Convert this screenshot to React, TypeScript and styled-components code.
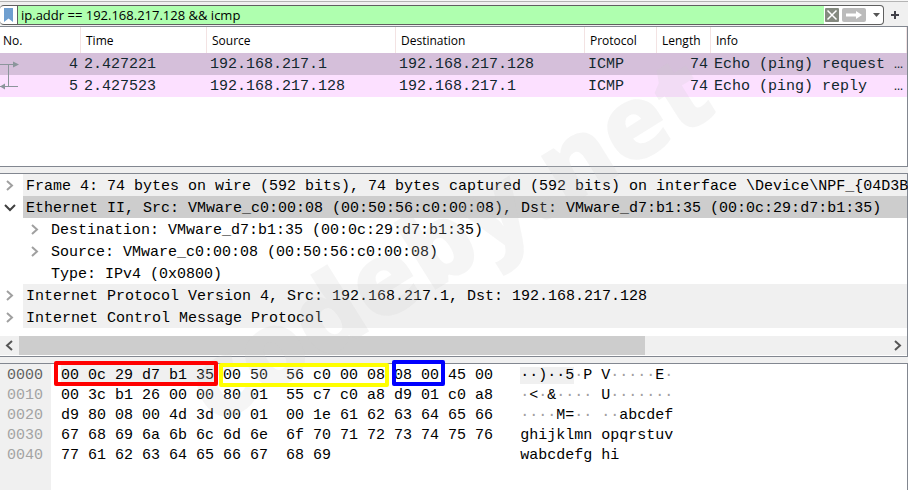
import React from "react";
import styled, { createGlobalStyle, css } from "styled-components";

const mono = '"Liberation Mono", "DejaVu Sans Mono", monospace';
const sans = '"Open Sans", "Noto Sans", sans-serif';
const line = "#828790";

const GlobalStyle = createGlobalStyle`
  *, *::before, *::after { box-sizing: border-box; }
  body { margin: 0; background: #f0f0f0; color: #000; }
  button { margin: 0; padding: 0; border: 0; background: none; }
  table { border-collapse: separate; border-spacing: 0; }
  svg { display: block; }
`;

const Window = styled.main`
  position: relative;
  display: flex;
  flex-direction: column;
  min-height: 100vh;
  overflow: hidden;
`;

const FilterBar = styled.form`
  display: flex;
  align-items: center;
  height: 26px;
  padding-top: 2px;
  border-top: 1px solid #f7f7f7;
  box-shadow: inset 0 1px 0 #b4b4b4;
`;

const FilterField = styled.div`
  flex: 1;
  display: flex;
  align-items: stretch;
  height: 20px;
  min-width: 0;
  overflow: hidden;
  border: 1px solid #5f5f5f;
  border-left-width: 0;
  border-radius: 4px;
  background: #fff;
`;

const BookmarkButton = styled.button`
  display: flex;
  align-items: center;
  justify-content: center;
  width: 18px;
  padding-right: 1px;
  border-right: 1px solid #5f5f5f;
`;

const FilterInput = styled.input`
  flex: 1;
  min-width: 0;
  margin: 0;
  padding: 0 3px;
  border: 0;
  outline: 0;
  background: #afffaf;
  color: #000;
  font: 13px/18px ${sans};
`;

const FieldActions = styled.div`
  display: flex;
  align-items: center;
  gap: 3px;
  padding: 0 1px;
`;

const ClearButton = styled.button`
  width: 14px;
  height: 14px;
  border-radius: 1px;
  background: #858a80;
`;

const ApplyButton = styled.button`
  width: 24px;
  height: 14px;
  margin-right: 2px;
  border-radius: 2px;
  background: #bbb;
`;

const HistoryButton = styled.button`
  display: flex;
  justify-content: center;
  width: 11px;
`;

const AddButton = styled.button`
  display: flex;
  align-items: center;
  justify-content: center;
  width: 24px;
  height: 20px;
  padding-right: 2px;
`;

const Pane = styled.section`
  border: 1px solid ${line};
  border-left: 0;
  background: #fff;
`;

const PacketPane = styled(Pane)`
  min-height: 141px;
  margin-bottom: 6px;
`;

const PacketTable = styled.table`
  width: 100%;
  table-layout: fixed;
`;

const PacketCol = styled.col<{ $w?: number }>`
  ${(p) => p.$w && css`width: ${p.$w}px;`}
`;

const HeadCell = styled.th`
  height: 26px;
  padding: 2px 0 0 5px;
  border-right: 1px solid #f3e3e3;
  font: 12px/24px ${sans};
  text-align: left;
  &:first-child { padding-left: 3px; }
`;

const PacketRow = styled.tr<{ $selected?: boolean }>`
  height: 22px;
  background: ${(p) => (p.$selected ? "#d5bfda" : "#fce0ff")};
`;

const PacketCell = styled.td<{ $right?: boolean }>`
  padding: 2px 3px 0;
  overflow: hidden;
  color: #12272e;
  font: 15px/20px ${mono};
  text-align: ${(p) => (p.$right ? "right" : "left")};
  white-space: pre;
`;

const NumberCell = styled(PacketCell)`
  padding: 0 3px 0 0;
`;

const NumberLine = styled.div`
  display: flex;
  justify-content: space-between;
  height: 22px;
  line-height: 24px;
`;

const TreePane = styled(Pane)`
  margin-bottom: 6px;
`;

const Tree = styled.ul`
  margin: 0;
  padding: 0 0 8px;
  list-style: none;
  font: 15px/26px ${mono};
`;

const TreeRow = styled.li<{ $child?: boolean }>`
  display: flex;
  height: 22px;
  padding-left: ${(p) => (p.$child ? 25 : 0)}px;
`;

const Toggle = styled.button`
  display: flex;
  align-items: center;
  justify-content: center;
  flex: 0 0 23px;
  padding-right: 3px;
`;

const ToggleSpace = styled.span`
  flex: 0 0 23px;
`;

const TreeText = styled.span<{ $tone?: "group" | "selected" }>`
  flex: 1;
  min-width: 0;
  padding-left: 3px;
  white-space: pre;
  background: ${(p) =>
    p.$tone === "selected" ? "#cdcdcd" : p.$tone === "group" ? "#f0f0f0" : "transparent"};
`;

const ScrollBar = styled.div`
  display: flex;
  height: 19px;
  margin-bottom: 1px;
  background: #f0f0f0;
`;

const ScrollArrow = styled.button`
  display: flex;
  align-items: center;
  justify-content: center;
  flex: 0 0 19px;
`;

const ScrollTrack = styled.div`
  flex: 1;
`;

const ScrollThumb = styled.div`
  width: 72%;
  height: 100%;
  background: #cdcdcd;
`;

const BytesPane = styled(Pane)`
  flex: 1;
  display: flex;
  border-bottom: 0;
  background: linear-gradient(to right, #f0f0f0 51px, #fff 51px);
`;

const BytesTable = styled.table`
  align-self: flex-start;
  margin-top: 1px;
  font: 15px/18px ${mono};
  white-space: pre;
`;

const Offset = styled.th<{ $active?: boolean }>`
  width: 51px;
  padding: 2px 0 0 7px;
  color: ${(p) => (p.$active ? "#626262" : "#a3a3a3")};
  font-weight: 400;
  text-align: left;
`;

const HexCell = styled.td`
  padding: 2px 0 0 10px;
`;

const AsciiCell = styled.td`
  padding: 2px 0 0 27px;
`;

const Selected = styled.span`
  background: #f0f0f0;
`;

const Dim = styled.span`
  color: #a0a0a0;
`;

const marks = {
  red: css`inset: -6px -4px -1px -7px; border: 4px solid #ff0000;`,
  yellow: css`inset: -4px -4px -2px -4px; border: 4px solid #ffff00;`,
  blue: css`inset: -7px -6px -1px -2px; border: 4px solid #0000ff;`,
};

const Marked = styled.span<{ $mark: keyof typeof marks; $filled?: boolean }>`
  position: relative;
  display: inline-block;
  height: 18px;
  vertical-align: top;
  ${(p) => p.$filled && css`background: #f0f0f0; box-shadow: 0 -2px 0 #f0f0f0;`}
  &::after {
    content: "";
    position: absolute;
    z-index: 2;
    border-radius: 2px;
    ${(p) => marks[p.$mark]}
  }
`;

const Watermark = styled.div`
  position: absolute;
  left: 446px;
  top: 236px;
  z-index: 1;
  transform: translate(-50%, -50%) rotate(-32deg);
  color: rgba(204, 204, 204, 0.2);
  font: 800 104px/1 "Open Sans", sans-serif;
  white-space: nowrap;
  pointer-events: none;
`;

type Direction = "left" | "right" | "down";

const chevrons: Record<Direction, string> = {
  left: "M8 1 L3 5.500 L8 10",
  right: "M3 1 L8 5.500 L3 10",
  down: "M1 3 L6 8 L11 3",
};

function Chevron({ dir, color = "#555" }: { dir: Direction; color?: string }) {
  return (
    <svg width="12" height="11" viewBox="0 0 12 11" aria-hidden="true">
      <path d={chevrons[dir]} fill="none" stroke={color} strokeWidth="2" />
    </svg>
  );
}

function RelatedMark({ reply }: { reply?: boolean }) {
  return (
    <svg width="19" height="22" viewBox="0 0 19 22" aria-hidden="true">
      {reply ? (
        <>
          <path d="M8.500 0V11.500M0 11.500H18" fill="none" stroke="#8b959b" />
          <path d="M0 11.500L5 8.500V14.500Z" fill="#8b959b" />
        </>
      ) : (
        <>
          <path d="M8.500 22V11.500M0 11.500H18" fill="none" stroke="#8b959b" />
          <path d="M19 11.500L13 8.500V14.500Z" fill="#8b959b" />
        </>
      )}
    </svg>
  );
}

const columns = [
  { label: "No.", width: 81 },
  { label: "Time", width: 126 },
  { label: "Source", width: 189 },
  { label: "Destination", width: 189 },
  { label: "Protocol", width: 72 },
  { label: "Length", width: 54 },
  { label: "Info" },
];

const packets = [
  { no: 4, time: "2.427221", src: "192.168.217.1", dst: "192.168.217.128", info: "Echo (ping) request …" },
  { no: 5, time: "2.427523", src: "192.168.217.128", dst: "192.168.217.1", info: "Echo (ping) reply   …" },
];

type Node = { text: string; tone?: "group" | "selected"; child?: boolean; leaf?: boolean };

const nodes: Node[] = [
  {
    text: "Frame 4: 74 bytes on wire (592 bits), 74 bytes captured (592 bits) on interface \\Device\\NPF_{04D3B",
    tone: "group",
  },
  {
    text: "Ethernet II, Src: VMware_c0:00:08 (00:50:56:c0:00:08), Dst: VMware_d7:b1:35 (00:0c:29:d7:b1:35)",
    tone: "selected",
  },
  { text: "Destination: VMware_d7:b1:35 (00:0c:29:d7:b1:35)", child: true },
  { text: "Source: VMware_c0:00:08 (00:50:56:c0:00:08)", child: true },
  { text: "Type: IPv4 (0x0800)", child: true, leaf: true },
  { text: "Internet Protocol Version 4, Src: 192.168.217.1, Dst: 192.168.217.128", tone: "group" },
  { text: "Internet Control Message Protocol", tone: "group" },
];

const dumps = [
  { offset: "0010", hex: "00 3c b1 26 00 00 80 01  55 c7 c0 a8 d9 01 c0 a8", ascii: "·<·&···· U·······" },
  { offset: "0020", hex: "d9 80 08 00 4d 3d 00 01  00 1e 61 62 63 64 65 66", ascii: "····M=·· ··abcdef" },
  { offset: "0030", hex: "67 68 69 6a 6b 6c 6d 6e  6f 70 71 72 73 74 75 76", ascii: "ghijklmn opqrstuv" },
  { offset: "0040", hex: "77 61 62 63 64 65 66 67  68 69", ascii: "wabcdefg hi" },
];

function Ascii({ text }: { text: string }) {
  return (
    <>
      {text.split(/(·+)/).map((part, i) => (part.startsWith("·") ? <Dim key={i}>{part}</Dim> : part))}
    </>
  );
}

export default function App() {
  return (
    <Window>
      <GlobalStyle />
      <FilterBar onSubmit={(e) => e.preventDefault()}>
        <FilterField>
          <BookmarkButton type="button" aria-label="Filter bookmarks">
            <svg width="9" height="14" viewBox="0 0 9 14">
              <path d="M0 0H9V14L4.500 10.500L0 14Z" fill="#6f9fd0" />
            </svg>
          </BookmarkButton>
          <FilterInput
            aria-label="Display filter"
            defaultValue="ip.addr == 192.168.217.128 && icmp"
            spellCheck={false}
          />
          <FieldActions>
            <ClearButton type="button" aria-label="Clear filter">
              <svg width="14" height="14" viewBox="0 0 14 14">
                <path d="M2.500 2.500L11.500 11.500M11.500 2.500L2.500 11.500" stroke="#fff" strokeWidth="1.500" />
              </svg>
            </ClearButton>
            <ApplyButton type="submit" aria-label="Apply filter">
              <svg width="24" height="14" viewBox="0 0 24 14">
                <path d="M4 5.500H14V3L20 7L14 11V8.500H4Z" fill="#fff" />
              </svg>
            </ApplyButton>
            <HistoryButton type="button" aria-label="Recent filters">
              <svg width="7" height="4" viewBox="0 0 7 4">
                <path d="M0 0H7L3.500 4Z" fill="#555" />
              </svg>
            </HistoryButton>
          </FieldActions>
        </FilterField>
        <AddButton type="button" aria-label="Add filter button">
          <svg width="8" height="8" viewBox="0 0 8 8">
            <path d="M4 0V8M0 4H8" stroke="#404048" strokeWidth="2" />
          </svg>
        </AddButton>
      </FilterBar>

      <PacketPane aria-label="Packet list">
        <PacketTable>
          <colgroup>
            {columns.map((c) => (
              <PacketCol key={c.label} $w={c.width} />
            ))}
          </colgroup>
          <thead>
            <tr>
              {columns.map((c) => (
                <HeadCell key={c.label} scope="col">{c.label}</HeadCell>
              ))}
            </tr>
          </thead>
          <tbody>
            {packets.map((p, i) => (
              <PacketRow key={p.no} $selected={i === 0}>
                <NumberCell>
                  <NumberLine>
                    <RelatedMark reply={i === 1} />
                    {p.no}
                  </NumberLine>
                </NumberCell>
                <PacketCell>{p.time}</PacketCell>
                <PacketCell>{p.src}</PacketCell>
                <PacketCell>{p.dst}</PacketCell>
                <PacketCell>ICMP</PacketCell>
                <PacketCell $right>74</PacketCell>
                <PacketCell>{p.info}</PacketCell>
              </PacketRow>
            ))}
          </tbody>
        </PacketTable>
      </PacketPane>

      <TreePane aria-label="Packet details">
        <Tree>
          {nodes.map((n) => {
            const open = n.tone === "selected";
            return (
              <TreeRow key={n.text} $child={n.child}>
                {n.leaf ? (
                  <ToggleSpace />
                ) : (
                  <Toggle type="button" aria-label={open ? "Collapse" : "Expand"} aria-expanded={open}>
                    <Chevron dir={open ? "down" : "right"} color={open ? "#404040" : "#a0a0a0"} />
                  </Toggle>
                )}
                <TreeText $tone={n.tone}>{n.text}</TreeText>
              </TreeRow>
            );
          })}
        </Tree>
        <ScrollBar>
          <ScrollArrow type="button" aria-label="Scroll left"><Chevron dir="left" /></ScrollArrow>
          <ScrollTrack><ScrollThumb /></ScrollTrack>
          <ScrollArrow type="button" aria-label="Scroll right"><Chevron dir="right" /></ScrollArrow>
        </ScrollBar>
      </TreePane>

      <BytesPane aria-label="Packet bytes">
        <BytesTable>
          <tbody>
            <tr>
              <Offset scope="row" $active>0000</Offset>
              <HexCell>
                <Marked $mark="red" $filled>00 0c 29 d7 b1 35</Marked>{" "}
                <Marked $mark="yellow">00 50  56 c0 00 08</Marked>{" "}
                <Marked $mark="blue">08 00</Marked> 45 00
              </HexCell>
              <AsciiCell>
                <Selected>··)··5</Selected>
                <Ascii text="·P V·····E·" />
              </AsciiCell>
            </tr>
            {dumps.map((d) => (
              <tr key={d.offset}>
                <Offset scope="row">{d.offset}</Offset>
                <HexCell>{d.hex}</HexCell>
                <AsciiCell><Ascii text={d.ascii} /></AsciiCell>
              </tr>
            ))}
          </tbody>
        </BytesTable>
      </BytesPane>

      <Watermark aria-hidden="true">codeby.net</Watermark>
    </Window>
  );
}
